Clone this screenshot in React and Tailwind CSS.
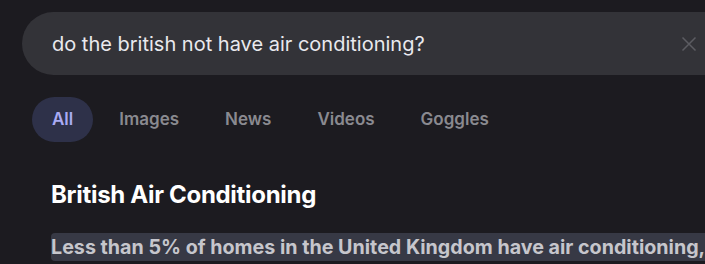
export default function App() {
  const tabs = ['Images', 'News', 'Videos', 'Goggles']

  return (
    <div className="w-[705px] h-[264px] overflow-hidden bg-[#1c1b20] font-['Inter',sans-serif]">
      <div className="pl-[22px] pt-[12px]">
        <div className="h-[63px] w-[720px] rounded-l-full bg-[#333338] flex items-center pl-[30px] pr-[33px]">
          <span className="flex-1 text-[20px] text-[#e9e9ee] font-['Inter',sans-serif]">
            do the british not have air conditioning?
          </span>
          <svg width="16" height="16" viewBox="0 0 16 16" className="mr-[12px]">
            <path d="M1.5 1.5 L14.5 14.5 M14.5 1.5 L1.5 14.5" stroke="#5c5c62" strokeWidth="1.5" fill="none" />
          </svg>
        </div>
      </div>

      <div className="flex items-center pl-[32px] mt-[22px] h-[45px]">
        <div className="h-[45px] px-[20px] rounded-full bg-[#2e3149] flex items-center text-[17px] font-semibold text-[#a9aaf3]">
          All
        </div>
        <div className="flex items-center gap-[46px] ml-[26px]">
          {tabs.map(t => (
            <span key={t} className="text-[17px] font-semibold text-[#8a8a90]">{t}</span>
          ))}
        </div>
      </div>

      <div className="pl-[51px] mt-[38px]">
        <h2 className="text-[24px] font-bold text-white tracking-[-0.3px] leading-[30px]">British Air Conditioning</h2>
        <div className="mt-[23px] inline-block whitespace-nowrap rounded-[4px] bg-[#373945] pr-[6px]">
          <span className="text-[19.7px] font-bold text-[#c6c6cc] leading-[28px]">
            Less than 5% of homes in the United Kingdom have air conditioning, compared to
          </span>
        </div>
      </div>
    </div>
  )
}
